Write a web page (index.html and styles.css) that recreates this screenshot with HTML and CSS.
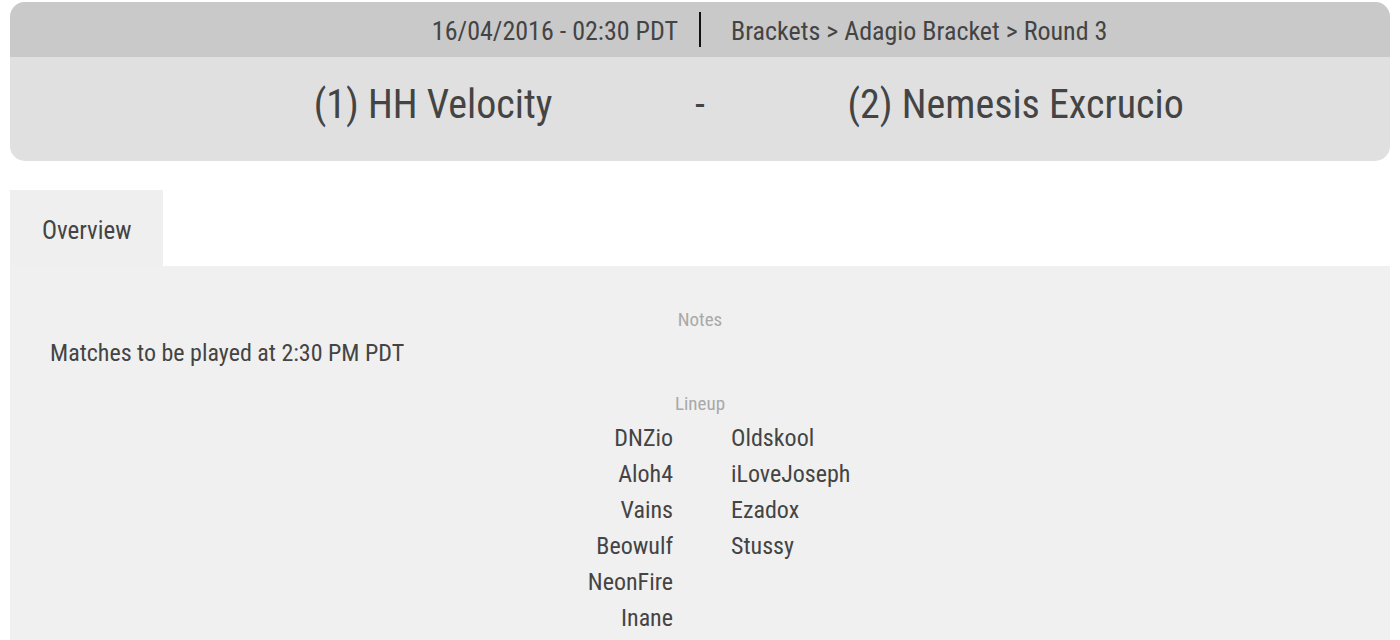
FILE: index.html
```html
<!DOCTYPE html>
<html lang="en">
<head>
  <meta charset="UTF-8" />
  <title>HH Velocity - Nemesis Excrucio</title>
  <link rel="stylesheet" href="styles.css">
</head>
<body>
  <div class="match-header">
    <div class="match-meta">
      <div class="meta-date">16/04/2016 - 02:30 PDT</div>
      <div class="meta-sep"></div>
      <div class="meta-crumbs">Brackets &gt; Adagio Bracket &gt; Round 3</div>
    </div>
    <div class="match-teams">
      <div class="team team-left">(1) HH Velocity</div>
      <div class="team-vs">-</div>
      <div class="team team-right">(2) Nemesis Excrucio</div>
    </div>
  </div>

  <div class="tabs">
    <div class="tab active">Overview</div>
  </div>
  <div class="tab-panel">
    <div class="section-label">Notes</div>
    <div class="notes">Matches to be played at 2:30 PM PDT</div>

    <div class="section-label lineup-label">Lineup</div>
    <div class="lineup">
      <ul class="roster roster-left">
        <li>DNZio</li>
        <li>Aloh4</li>
        <li>Vains</li>
        <li>Beowulf</li>
        <li>NeonFire</li>
        <li>Inane</li>
      </ul>
      <ul class="roster roster-right">
        <li>Oldskool</li>
        <li>iLoveJoseph</li>
        <li>Ezadox</li>
        <li>Stussy</li>
      </ul>
    </div>
  </div>
</body>
</html>
```

FILE: styles.css
```css
body {
  font-family: 'Roboto Condensed', 'DejaVu Sans', sans-serif;
  color: #444;
  background: #fff;
  margin: 0;
  padding: 2px 10px 0;
}
.match-header {
  background: #e0e0e0;
  border-radius: 15px;
  overflow: hidden;
}
.match-meta {
  display: grid;
  grid-template-columns: 1fr auto 1fr;
  align-items: center;
  height: 55px;
  padding-top: 3px;
  box-sizing: border-box;
  background: #c9c9c9;
  font-size: 26px;
}
.meta-date {
  text-align: right;
  padding-right: 21px;
}
.meta-sep {
  width: 2px;
  height: 35px;
  margin-top: -4px;
  background: #111;
}
.meta-crumbs {
  padding-left: 30px;
}
.match-teams {
  display: grid;
  grid-template-columns: 1fr 295px 1fr;
  align-items: center;
  height: 104px;
  padding-bottom: 10px;
  box-sizing: border-box;
  font-size: 40px;
}
.team-left {
  text-align: right;
}
.team-vs {
  text-align: center;
}
.tabs {
  display: flex;
  margin-top: 29px;
}
.tab {
  width: 153px;
  height: 76px;
  box-sizing: border-box;
  padding-left: 32px;
  line-height: 82px;
  font-size: 25px;
  background: #efefef;
}
.tab-panel {
  background: #f0f0f0;
  padding: 42px 40px 0;
  height: 374px;
  box-sizing: border-box;
}
.section-label {
  text-align: center;
  color: #a9a9a9;
  font-size: 19px;
  line-height: 24px;
}
.notes {
  font-size: 24px;
  line-height: 30px;
  margin-top: 6px;
}
.lineup-label {
  margin-top: 24px;
}
.lineup {
  display: flex;
  justify-content: center;
  gap: 58px;
  margin-top: 4px;
  padding-left: 4px;
}
.roster {
  list-style: none;
  margin: 0;
  padding: 0;
  width: 200px;
  font-size: 24px;
  line-height: 36px;
}
.roster-left {
  text-align: right;
}
```
